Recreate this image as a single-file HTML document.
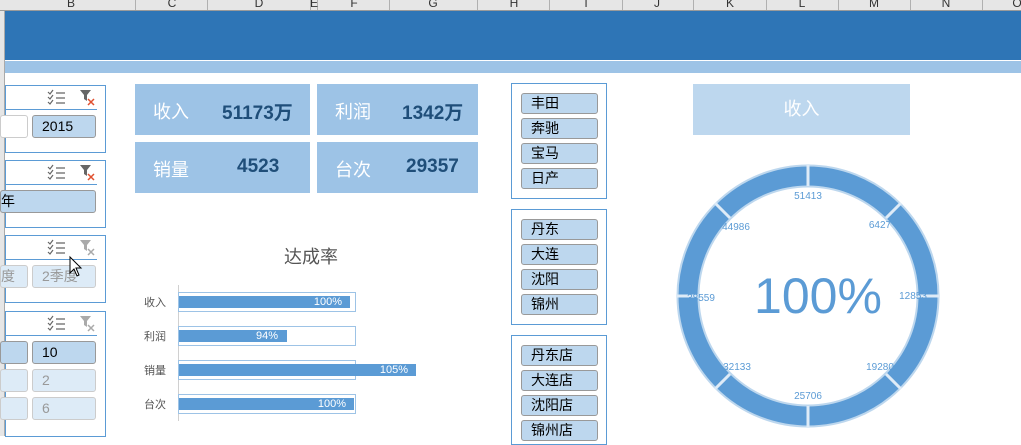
<!DOCTYPE html>
<html><head><meta charset="utf-8"><style>
*{margin:0;padding:0;box-sizing:border-box}
body{width:1021px;height:436px;overflow:hidden;background:#fff;position:relative;font-family:"Liberation Sans","Noto Sans CJK SC",sans-serif}
.a{position:absolute}
.hdr{left:0;top:0;width:1021px;height:11px;background:#e6e6e6;border-bottom:1px solid #9a9a9a}
.col{position:absolute;top:0;height:10px;width:1px;background:#b0b0b0}
.cl{position:absolute;top:-4px;font-size:12px;color:#333;width:20px;text-align:center;margin-left:-10px}
.kpi{background:#9dc3e6;height:51px;color:#fff;font-size:18px}
.kpi span{position:absolute;top:14px}
.kpi b{position:absolute;top:14px;color:#1f4e79;font-size:19px}
.box{border:1px solid #5b9bd5;background:#fff}
.btn{position:absolute;background:#bdd7ee;border:1px solid #999;border-radius:3px;height:21px;font-size:14px;color:#000;padding-left:9px;line-height:19px}
.lb{position:absolute;height:23px;border-radius:3px;font-size:14px;line-height:21px;padding-left:9px}
.on{background:#bdd7ee;border:1px solid #999;color:#000}
.off{background:#ddebf7;border:1px solid #ccc;color:#999}
.wh{background:#fff;border:1px solid #ccc}
.hl{position:absolute;left:0;top:23px;width:91px;height:1px;background:#5b9bd5}
.ic{position:absolute;top:3px}
.bar{position:absolute;left:179px;height:12px;background:#5b9bd5;color:#fff;font-size:11px;text-align:right;line-height:12px}
</style></head><body>
<div class="a hdr"></div>
<div class="col" style="left:135px"></div><div class="col" style="left:207px"></div><div class="col" style="left:310px"></div><div class="col" style="left:317px"></div><div class="col" style="left:389px"></div><div class="col" style="left:477px"></div><div class="col" style="left:549px"></div><div class="col" style="left:622px"></div><div class="col" style="left:693px"></div><div class="col" style="left:766px"></div><div class="col" style="left:838px"></div><div class="col" style="left:910px"></div><div class="col" style="left:982px"></div>
<div class="cl" style="left:71px">B</div><div class="cl" style="left:172px">C</div><div class="cl" style="left:259px">D</div><div class="cl" style="left:314px">E</div><div class="cl" style="left:354px">F</div><div class="cl" style="left:433px">G</div><div class="cl" style="left:514px">H</div><div class="cl" style="left:586px">I</div><div class="cl" style="left:657px">J</div><div class="cl" style="left:730px">K</div><div class="cl" style="left:802px">L</div><div class="cl" style="left:874px">M</div><div class="cl" style="left:946px">N</div><div class="cl" style="left:1017px">O</div>
<div class="a" style="left:0;top:11px;width:1021px;height:49px;background:#2e75b6"></div>
<div class="a" style="left:0;top:61px;width:1021px;height:12px;background:#9dc3e6"></div>
<div class="a" style="left:0;top:11px;width:5px;height:425px;background:#e6e6e6;border-right:1px solid #aaa"></div>

<!-- left slicers -->
<div class="a box" style="left:5px;top:85px;width:101px;height:68px"><div class="hl"></div>
<svg class="ic" style="left:41px" width="20" height="16"><g stroke="#666" stroke-width="1.2" fill="none"><path d="M1 3l2 2 3-4M1 8l2 2 3-4M1 13l2 2 3-4M9 4h9M9 9h9M9 14h9"/></g></svg>
<svg class="ic" style="left:74px" width="16" height="18"><path d="M0 1h11l-4 5v6l-3-2v-4z" fill="#666"/><path d="M8 10l6 6M14 10l-6 6" stroke="#e05030" stroke-width="1.5"/></svg>
<div class="lb wh" style="left:-6px;top:29px;width:28px"></div><div class="lb on" style="left:26px;top:29px;width:64px">2015</div></div>
<div class="a box" style="left:5px;top:160px;width:101px;height:68px"><div class="hl"></div>
<svg class="ic" style="left:41px" width="20" height="16"><g stroke="#666" stroke-width="1.2" fill="none"><path d="M1 3l2 2 3-4M1 8l2 2 3-4M1 13l2 2 3-4M9 4h9M9 9h9M9 14h9"/></g></svg>
<svg class="ic" style="left:74px" width="16" height="18"><path d="M0 1h11l-4 5v6l-3-2v-4z" fill="#666"/><path d="M8 10l6 6M14 10l-6 6" stroke="#e05030" stroke-width="1.5"/></svg>
<div class="lb on" style="left:-6px;top:29px;width:96px;padding-left:0">年</div></div>
<div class="a box" style="left:5px;top:235px;width:101px;height:68px"><div class="hl"></div>
<svg class="ic" style="left:41px" width="20" height="16"><g stroke="#666" stroke-width="1.2" fill="none"><path d="M1 3l2 2 3-4M1 8l2 2 3-4M1 13l2 2 3-4M9 4h9M9 9h9M9 14h9"/></g></svg>
<svg class="ic" style="left:74px" width="16" height="18"><path d="M0 1h11l-4 5v6l-3-2v-4z" fill="#aaa"/><path d="M8 10l6 6M14 10l-6 6" stroke="#aaa" stroke-width="1.5"/></svg>
<div class="lb off" style="left:-6px;top:29px;width:28px;padding-left:0">度</div><div class="lb off" style="left:26px;top:29px;width:64px">2季度</div></div>
<div class="a box" style="left:5px;top:311px;width:101px;height:126px"><div class="hl"></div>
<svg class="ic" style="left:41px" width="20" height="16"><g stroke="#666" stroke-width="1.2" fill="none"><path d="M1 3l2 2 3-4M1 8l2 2 3-4M1 13l2 2 3-4M9 4h9M9 9h9M9 14h9"/></g></svg>
<svg class="ic" style="left:74px" width="16" height="18"><path d="M0 1h11l-4 5v6l-3-2v-4z" fill="#aaa"/><path d="M8 10l6 6M14 10l-6 6" stroke="#aaa" stroke-width="1.5"/></svg>
<div class="lb on" style="left:-6px;top:29px;width:28px"></div><div class="lb on" style="left:26px;top:29px;width:64px">10</div>
<div class="lb off" style="left:-6px;top:57px;width:28px"></div><div class="lb off" style="left:26px;top:57px;width:64px">2</div>
<div class="lb off" style="left:-6px;top:85px;width:28px"></div><div class="lb off" style="left:26px;top:85px;width:64px">6</div></div>

<!-- KPIs -->
<div class="a kpi" style="left:135px;top:84px;width:175px"><span style="left:18px">收入</span><b style="left:87px">51173万</b></div>
<div class="a kpi" style="left:317px;top:84px;width:161px"><span style="left:18px">利润</span><b style="left:85px">1342万</b></div>
<div class="a kpi" style="left:135px;top:142px;width:175px"><span style="left:18px">销量</span><b style="left:102px">4523</b></div>
<div class="a kpi" style="left:317px;top:142px;width:161px"><span style="left:18px">台次</span><b style="left:89px">29357</b></div>

<!-- bar chart -->
<div class="a" style="left:284px;top:243px;font-size:18px;color:#555">达成率</div>
<div class="a" style="left:178px;top:285px;width:1px;height:136px;background:#d0d0d0"></div>
<div class="a" style="font-size:11px;color:#555;left:144px;top:294px">收入</div>
<div class="a" style="font-size:11px;color:#555;left:144px;top:328px">利润</div>
<div class="a" style="font-size:11px;color:#555;left:144px;top:362px">销量</div>
<div class="a" style="font-size:11px;color:#555;left:144px;top:396px">台次</div>
<div class="a" style="left:178px;top:292px;width:178px;height:20px;border:1px solid #9dc3e6"></div>
<div class="a" style="left:178px;top:326px;width:178px;height:20px;border:1px solid #9dc3e6"></div>
<div class="a" style="left:178px;top:360px;width:178px;height:20px;border:1px solid #9dc3e6"></div>
<div class="a" style="left:178px;top:394px;width:178px;height:20px;border:1px solid #9dc3e6"></div>
<div class="bar" style="top:296px;width:171px;padding-right:8px">100%</div>
<div class="bar" style="top:330px;width:108px;padding-right:9px">94%</div>
<div class="bar" style="top:364px;width:237px;padding-right:8px">105%</div>
<div class="bar" style="top:398px;width:175px;padding-right:8px">100%</div>

<!-- right slicers -->
<div class="a box" style="left:511px;top:83px;width:96px;height:116px">
<div class="btn" style="left:9px;top:9px;width:77px">丰田</div><div class="btn" style="left:9px;top:34px;width:77px">奔驰</div><div class="btn" style="left:9px;top:59px;width:77px">宝马</div><div class="btn" style="left:9px;top:84px;width:77px">日产</div></div>
<div class="a box" style="left:511px;top:209px;width:96px;height:116px">
<div class="btn" style="left:9px;top:9px;width:77px">丹东</div><div class="btn" style="left:9px;top:34px;width:77px">大连</div><div class="btn" style="left:9px;top:59px;width:77px">沈阳</div><div class="btn" style="left:9px;top:84px;width:77px">锦州</div></div>
<div class="a box" style="left:511px;top:335px;width:96px;height:110px">
<div class="btn" style="left:9px;top:9px;width:77px">丹东店</div><div class="btn" style="left:9px;top:34px;width:77px">大连店</div><div class="btn" style="left:9px;top:59px;width:77px">沈阳店</div><div class="btn" style="left:9px;top:84px;width:77px">锦州店</div></div>

<div class="a" style="left:693px;top:84px;width:217px;height:51px;background:#bdd7ee;color:#fff;font-size:18px;text-align:center;line-height:51px">收入</div>

<svg class="a" style="left:0;top:0" width="1021" height="436">
<circle cx="808" cy="296" r="120" fill="none" stroke="#bdd7ee" stroke-width="23"/>
<circle cx="808" cy="296" r="120" fill="none" stroke="#5b9bd5" stroke-width="19"/>
<g stroke="#deebf7" stroke-width="3">
<line x1="808" y1="164" x2="808" y2="186"/><line x1="808" y1="406" x2="808" y2="428"/>
<line x1="676" y1="296" x2="698" y2="296"/><line x1="918" y1="296" x2="940" y2="296"/>
<line x1="715" y1="203" x2="730" y2="218"/><line x1="886" y1="374" x2="901" y2="389"/>
<line x1="901" y1="203" x2="886" y2="218"/><line x1="730" y1="374" x2="715" y2="389"/>
</g>
<g fill="#5b9bd5" font-family="Liberation Sans, sans-serif" font-size="10" text-anchor="middle">
<text x="808" y="199">51413</text><text x="880" y="228">6427</text><text x="913" y="299">12853</text>
<text x="880" y="370">19280</text><text x="808" y="399">25706</text><text x="737" y="370">32133</text>
<text x="701" y="301">38559</text><text x="736" y="230">44986</text>
<text x="818" y="313" font-size="50">100%</text>
</g>
<path d="M70 257 L70 273 L74 269 L77 276 L79 275 L76 268 L81 268 Z" fill="#fff" stroke="#000" stroke-width="1"/>
</svg>
</body></html>
